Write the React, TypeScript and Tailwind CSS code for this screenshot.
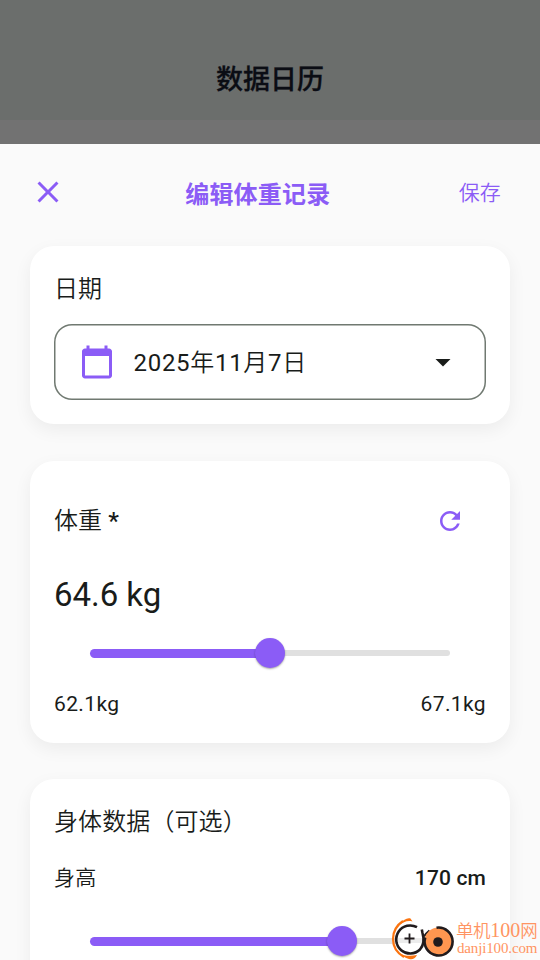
import type { ReactNode } from "react";

function Icon({ d, className }: { d: string; className: string }) {
  return (
    <svg viewBox="0 0 24 24" fill="currentColor" className={className}>
      <path d={d} />
    </svg>
  );
}

const CLOSE = "M19 6.41L17.59 5 12 10.59 6.41 5 5 6.41 10.59 12 5 17.59 6.41 19 12 13.41 17.59 19 19 17.59 13.41 12z";
const CALENDAR =
  "M20 3h-1V1h-2v2H7V1H5v2H4c-1.1 0-2 .9-2 2v16c0 1.1.9 2 2 2h16c1.1 0 2-.9 2-2V5c0-1.1-.9-2-2-2zm0 18H4V8h16v13z";
const REFRESH =
  "M17.65 6.35C16.2 4.9 14.21 4 12 4c-4.42 0-7.99 3.58-7.99 8s3.57 8 7.99 8c3.73 0 6.84-2.55 7.73-6h-2.08c-.82 2.33-3.04 4-5.65 4-3.31 0-6-2.69-6-6s2.69-6 6-6c1.66 0 3.14.69 4.22 1.78L13 11h7V4l-2.35 2.35z";
const DROPDOWN = "M7 10l5 5 5-5z";

function Card({ children, className }: { children: ReactNode; className: string }) {
  return (
    <section
      className={`mx-[30px] shrink-0 rounded-[24px] bg-white px-6 shadow-[0_6px_18px_rgba(0,0,0,0.06)] ${className}`}
    >
      {children}
    </section>
  );
}

function Slider({ percent }: { percent: number }) {
  return (
    <div className="mx-9 flex h-[30px] items-center">
      <div className="h-[9px] rounded-l-full bg-[#8b5cf6]" style={{ width: `${percent}%` }} />
      <div className="z-10 -mx-[15px] size-[30px] shrink-0 rounded-full bg-[#8b5cf6] shadow-[0_1px_2px_rgba(0,0,0,0.35)]" />
      <div className="h-[6px] flex-1 rounded-r-full bg-[#e0e0e0]" />
    </div>
  );
}

function Watermark() {
  return (
    <div className="absolute left-[390px] top-[916px] flex h-[44px] w-[150px] text-[#ff9462]">
      <svg viewBox="0 0 66 44" className="h-[44px] w-[66px] shrink-0" fill="none">
        <path d="M13 5C7 9 3 15 3 23c0 8 4 14 11 18" stroke="#fb7410" strokeWidth="2.200" />
        <path d="M9 9C13 4 17 1.500 20.500 2.500l2 3c-5-1.500-9 .5-13.500 3.500zM9 37c5 3 11 3.500 18 2-2 4-5 5-8 4-4-1-7-3-10-6z" fill="#fb7410" />
        <circle cx="20" cy="23" r="14" fill="white" />
        <path d="M7 22h26v5H8z" fill="#e0e0e0" fillOpacity="0.6" />
        <path d="M27 11.200A14 14 0 1 0 30 33.500C33.500 29.500 34.500 24 32.500 17L31.800 13.500" stroke="#211b1d" strokeWidth="2.600" />
        <path d="M34 20.500C35.500 18 37 16.500 39.500 14.500" stroke="#211b1d" strokeWidth="2.200" />
        <path d="M19.500 17.500v10M14.500 22.500h10" stroke="#211b1d" strokeWidth="1.800" />
        <circle cx="48.500" cy="25.500" r="14" fill="#ff9650" />
        <path d="M46.500 11.700A14 14 0 1 1 35.200 21.500" stroke="#211b1d" strokeWidth="2.600" />
        <circle cx="48" cy="26" r="4.800" fill="#211b1d" />
      </svg>
      <div className="flex flex-col whitespace-nowrap pt-[3px] font-['Noto_Sans_CJK_SC',sans-serif] font-[350]">
        <span className="text-[17.5px] leading-[22px] tracking-[-0.4px]">
          单机<span className="font-['Liberation_Serif',serif] text-[20px] tracking-[0px]">100</span>网
        </span>
        <span className="pl-px font-['Liberation_Serif',serif] text-[15px] leading-[15px] tracking-[-0.15px]">danji100.com</span>
      </div>
    </div>
  );
}

export default function App() {
  return (
    <div className="relative flex h-[960px] w-[540px] flex-col overflow-hidden bg-[#727272] font-['Roboto','Noto_Sans_CJK_SC',sans-serif] text-[#191c1a]">
      <header className="flex h-[120px] shrink-0 items-end justify-center bg-[#6b6e6c] pb-[20px]">
        <h1 className="text-[27px] font-medium leading-[40px] text-[#0b0d14] [-webkit-text-stroke:0.3px_#0b0d14]">数据日历</h1>
      </header>
      <main className="mt-6 flex min-h-0 flex-1 flex-col overflow-hidden bg-[#fafafa]">
        <div className="flex h-[102px] shrink-0 items-center justify-between pb-[6px] pl-[30px] pr-[39px] text-[#8b5cf6]">
          <Icon d={CLOSE} className="size-9" />
          <h2 className="-ml-[9px] mt-[6px] text-[24px] font-bold leading-9 tracking-[0.225px]">编辑体重记录</h2>
          <button className="mt-[2px] text-[21px] font-[350] leading-8 tracking-[0.15px]">保存</button>
        </div>

        <Card className="h-[178px]">
          <h3 className="pt-[25px] text-[24px] font-[350] leading-9 tracking-[0.1px]">日期</h3>
          <button className="mt-[17px] flex h-[76px] w-[432px] items-center rounded-[18px] pl-[25px] pr-[25.5px] shadow-[inset_0_0_0_1.5px_#707971]">
            <Icon d={CALENDAR} className="size-9 text-[#8b5cf6]" />
            <span className="ml-[18.5px] pt-px text-[24px] leading-9 tracking-[0.7px]">
              2025<span className="font-[350]">年</span>11<span className="font-[350]">月</span>7
              <span className="font-[350]">日</span>
            </span>
            <Icon d={DROPDOWN} className="ml-auto size-9" />
          </button>
        </Card>

        <Card className="mt-[37px] h-[281.5px]">
          <div className="mt-6 flex h-[72px] items-center justify-between pr-[21px]">
            <h3 className="text-[24px] font-normal leading-9 tracking-[0.1px]">
              <span className="font-[350]">体重</span> <span className="font-medium">*</span>
            </h3>
            <Icon d={REFRESH} className="size-[30px] text-[#8b5cf6]" />
          </div>
          <p className="mt-[14px] text-[33px] leading-[48px] tracking-[-0.05px]">64.6 kg</p>
          <div className="mt-[19px]">
            <Slider percent={50} />
          </div>
          <div className="mt-[21px] flex justify-between text-[21px] leading-[30px] tracking-[0.375px]">
            <span>62.1kg</span>
            <span>67.1kg</span>
          </div>
        </Card>

        <Card className="mt-[36.5px] h-[282px]">
          <h3 className="pt-[25px] text-[24px] font-[350] leading-9 tracking-[0.1px]">身体数据（可选）</h3>
          <div className="mt-[23px] flex justify-between text-[21px] leading-[30px] tracking-[0.15px]">
            <span className="font-[350]">身高</span>
            <span className="font-medium">170 cm</span>
          </div>
          <div className="mt-[33px]">
            <Slider percent={70} />
          </div>
        </Card>
      </main>
      <Watermark />
    </div>
  );
}
